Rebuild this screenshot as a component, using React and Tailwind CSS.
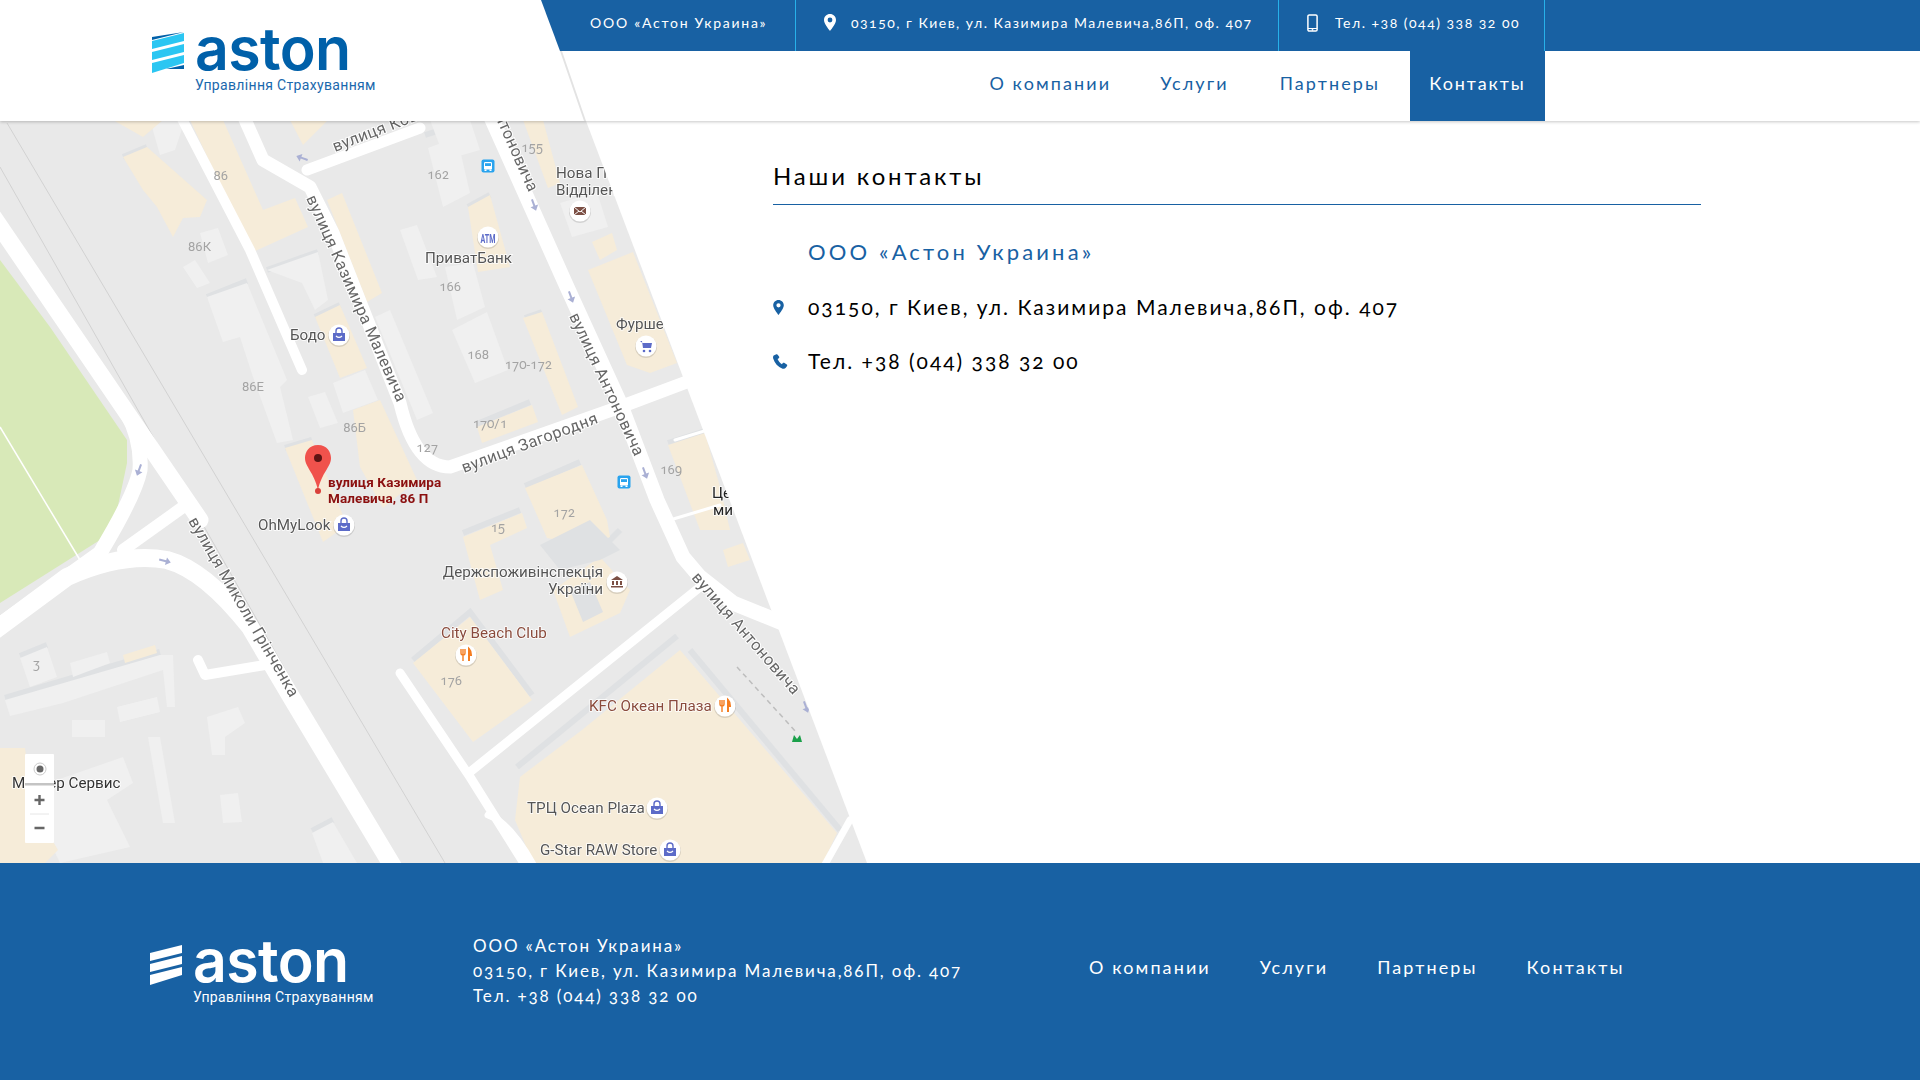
import React from 'react';

// карта: координаты даны в системе страницы (см. viewBox ниже)
const cream = [
  '113,120 163,120 143,137',
  '123,157 147,147 207,200 200,217 183,218 173,237 157,207 143,190',
  '190,120 223,120 263,210 295,198 308,227 253,252 243,233',
  '290,120 328,120 303,145',
  '327,200 342,193 382,293 367,302',
  '315,317 340,305 367,368 340,378',
  '353,410 380,400 417,480 383,508 360,467',
  '285,448 312,440 347,525 323,542',
  '523,120 543,120 560,183 548,188',
  '468,207 490,195 510,267 478,272',
  '588,270 633,252 677,363 650,373 627,365',
  '592,242 612,233 617,250 600,260',
  '523,318 542,312 578,407 562,415',
  '477,427 532,405 538,422 482,443',
  '525,488 582,465 607,520 610,537 575,552 557,540 547,538',
  '668,445 705,433 720,487 730,530 700,530',
  '463,537 522,513 527,528 490,545 503,590 480,600',
  '553,590 600,557 630,590 620,613 570,637',
  '413,663 470,617 532,700 473,742',
  '515,820 520,777 582,730 680,650 837,833 823,863 533,863',
  '723,550 743,543 750,560 728,567',
  '123,655 155,645 157,653 125,663',
  '0,748 25,748 33,807 58,850 45,863 0,863',
];

const light = [
  '207,297 247,283 287,380 280,387 293,440 277,443 253,377 240,337 223,342',
  '267,270 318,252 328,300 315,310 302,283',
  '200,233 218,228 228,255 208,263',
  '183,267 195,260 210,283 197,288',
  '333,383 365,370 378,400 343,413',
  '308,397 325,392 338,423 320,428',
  '400,230 417,225 437,277 418,280',
  '375,317 390,310 433,413 417,420',
  '428,148 457,137 470,193 443,207',
  '445,267 473,263 485,307 457,320',
  '452,330 487,312 508,370 475,383',
  '560,203 597,192 608,227 572,237',
  '20,658 47,647 57,677 30,687',
  '5,700 160,655 173,655 175,707 167,707 163,670 63,703 10,716',
  '70,663 107,652 110,663 73,677',
  '117,707 157,697 160,712 120,722',
  '72,720 105,720 105,737 72,737',
  '207,717 238,707 245,723 225,737 225,755 212,755',
  '220,795 238,793 242,822 223,823',
  '148,737 160,737 175,823 163,823',
  '57,780 123,757 133,783 107,800 130,847 60,863 33,807',
  '312,833 333,822 357,863 323,863',
  '150,120 185,120 175,150 160,155',
  '430,120 470,120 480,150 445,160',
];

const shade = [
  'M123,157 L147,147',
  'M207,297 L247,281',
  'M267,270 L318,252',
  'M315,317 L340,305',
  'M285,448 L312,440',
  'M425,135 L457,125',
  'M468,207 L490,195',
  'M525,318 L542,312',
  'M477,424 L530,402',
  'M525,486 L580,462',
  'M463,533 L520,510',
  'M413,660 L470,612 L532,695',
  'M517,767 L677,636',
  'M690,650 L840,830',
  'M20,656 L47,645',
  'M5,698 L160,652',
  'M312,831 L333,820',
  'M668,443 L705,431',
  'M590,560 L620,530',
];

const roads = [
  { d: 'M-10,212 L127,413 L200,520', w: 17 },
  { d: 'M127,413 Q142,440 140,470 Q135,495 100,553 L-10,632', w: 15 },
  { d: 'M183,507 L123,550', w: 12 },
  { d: 'M-10,634 L67,577 Q123,552 167,560 Q205,570 250,627 L293,700 L395,870', w: 18 },
  { d: 'M180,115 L250,250 L302,370', w: 10 },
  { d: 'M243,115 L263,160 L310,187 L333,233 L400,403 Q415,467 450,467 L620,407 L700,377', w: 13 },
  { d: 'M307,170 L420,128', w: 11 },
  { d: 'M490,115 L567,287 L620,403 L657,500 L683,557 L700,577 L733,603 L780,622', w: 15 },
  { d: 'M700,587 L470,772', w: 9 },
  { d: 'M400,673 L470,777 L527,868', w: 9 },
  { d: 'M488,815 Q510,822 535,868', w: 7 },
  { d: 'M850,820 L823,868', w: 7 },
  { d: 'M198,660 L205,675 L265,665', w: 10 },
  { d: 'M675,440 L740,420', w: 3 },
  { d: 'M670,520 L720,505', w: 3 },
];

const streets = [
  { t: 'вулиця Ковальський', x: 335, y: 152, a: -21 },
  { t: 'вулиця Антоновича', x: 529, y: 193, a: 66, end: true },
  { t: 'вулиця Антоновича', x: 569, y: 316, a: 65 },
  { t: 'вулиця Антоновича', x: 691, y: 578, a: 49 },
  { t: 'вулиця Казимира Малевича', x: 306, y: 198, a: 66 },
  { t: 'вулиця Загородня', x: 464, y: 473, a: -20.5 },
  { t: 'вулиця Миколи Грінченка', x: 188, y: 521, a: 60 },
];

const numbers = [
  ['86', 228, 176], ['86К', 211, 247], ['86Е', 264, 387], ['86Б', 366, 428], ['127', 438, 448],
  ['162', 449, 175], ['155', 543, 148], ['166', 461, 287], ['168', 489, 355], ['170-172', 552, 365],
  ['170/1', 507, 424], ['172', 575, 513], ['169', 682, 470], ['15', 505, 528], ['176', 462, 681], ['3', 40, 665],
];

const pois = [
  { t: 'ПриватБанк', x: 425, y: 263 },
  { t: 'Бодо', x: 290, y: 340 },
  { t: 'Нова Пошта', x: 556, y: 178 },
  { t: 'Відділення', x: 556, y: 195 },
  { t: 'Фурше', x: 616, y: 329 },
  { t: 'Центр', x: 712, y: 498, c: '#222' },
  { t: 'ми', x: 713, y: 515, c: '#222' },
  { t: 'OhMyLook', x: 258, y: 530 },
  { t: 'Держспоживінспекція', x: 603, y: 577, end: true },
  { t: 'України', x: 603, y: 594, end: true },
  { t: 'City Beach Club', x: 441, y: 638, c: '#8a4b3c' },
  { t: 'KFC Океан Плаза', x: 589, y: 711, c: '#8a4b3c' },
  { t: 'ТРЦ Ocean Plaza', x: 527, y: 813 },
  { t: 'G-Star RAW Store', x: 540, y: 855 },
  { t: 'Мастер Сервис', x: 12, y: 788, c: '#333' },
];

const arrows = [[302, 158, 200], [534, 205, 70], [571, 297, 70], [645, 473, 70], [139, 470, 110], [165, 561, 15], [806, 707, 70]];

function PoiMarker({ x, y, kind }) {
  return (
    <g transform={`translate(${x} ${y})`}>
      <circle r="11" cy="1" fill="#000" opacity="0.12" />
      <circle r="10.5" fill="#fff" />
      {kind === 'bag' && (
        <g fill="#5c6bc8">
          <path d="M-6,-2 H6 V6 H-6 Z" />
          <path d="M-3,-2 V-4 A3,3 0 0 1 3,-4 V-2" fill="none" stroke="#5c6bc8" strokeWidth="1.4" />
          <path d="M-3,1 Q0,4 3,1" fill="none" stroke="#fff" strokeWidth="1.2" />
        </g>
      )}
      {kind === 'food' && (
        <g stroke="#f57c1f" fill="none" strokeWidth="2">
          <path d="M-3,-6 V6 M-5,-6 V-2 Q-5,0 -3,0 Q-1,0 -1,-2 V-6" strokeWidth="1.4" />
          <path d="M3,6 V-6 Q5,-4 5,0 H3" strokeWidth="2" />
        </g>
      )}
      {kind === 'atm' && <text y="6" textAnchor="middle" fontSize="13" fontWeight="700" fill="#5c6bc8" fontFamily="Roboto, sans-serif" textLength="15" lengthAdjust="spacingAndGlyphs">ATM</text>}
      {kind === 'mail' && (
        <g>
          <path d="M-6,-4 H6 V4 H-6 Z" fill="#7b4f44" />
          <path d="M-6,-4 L0,1 L6,-4 M-6,4 L-1,0 M6,4 L1,0" fill="none" stroke="#fff" strokeWidth="1" />
        </g>
      )}
      {kind === 'cart' && (
        <g fill="#5c6bc8">
          <path d="M-6,-5 H-4 L-3,2 H5 L6,-3 H-3.5 Z" />
          <circle cx="-2" cy="5" r="1.3" />
          <circle cx="4" cy="5" r="1.3" />
        </g>
      )}
      {kind === 'gov' && (
        <g fill="#7b4f44">
          <path d="M-6,-2 L0,-6 L6,-2 Z" />
          <path d="M-5,-1 H-3 V3 H-5 Z M-1,-1 H1 V3 H-1 Z M3,-1 H5 V3 H3 Z M-6,4 H6 V5.5 H-6 Z" />
        </g>
      )}
    </g>
  );
}

function BusIcon({ x, y }) {
  return (
    <g transform={`translate(${x} ${y})`}>
      <rect x="-6.5" y="-6.5" width="13" height="13" rx="2" fill="#29a3ee" />
      <rect x="-4" y="-4" width="8" height="7.5" rx="1.2" fill="#fff" />
      <rect x="-3" y="-2.8" width="6" height="2.8" fill="#29a3ee" />
      <rect x="-3.5" y="3.5" width="2" height="1.5" fill="#fff" />
      <rect x="1.5" y="3.5" width="2" height="1.5" fill="#fff" />
    </g>
  );
}

function MapPicture() {
  return (
    <svg width="867" height="742" viewBox="0 121 867 742" className="block blur-[0.5px]">
      <rect x="0" y="121" width="867" height="742" fill="#e9e9e9" />
      <path d="M0,260 L50,327 L127,440 L127,463 L115,520 L100,540 L0,603 Z" fill="#d8e9b8" />
      <path d="M0,427 L80,560" stroke="#fff" strokeWidth="1.5" fill="none" />
      <path d="M7,123 L445,863 M0,167 L395,863" stroke="#d2d2d2" strokeWidth="1" fill="none" />
      {shade.map((d) => <path key={d} d={d} stroke="#dfe1e3" strokeWidth="6" fill="none" />)}
      {light.map((p) => <polygon key={p} points={p} fill="#f0f0f0" />)}
      {cream.map((p) => <polygon key={p} points={p} fill="#f6ecd9" />)}
      <polygon points="570,590 590,582 603,612 583,622" fill="#dfe1e3" />
      <polygon points="540,545 590,520 620,550 600,560 560,570" fill="#dfe1e3" />
      {roads.map((r) => <path key={r.d} d={r.d} stroke="#fff" strokeWidth={r.w} fill="none" strokeLinecap="round" strokeLinejoin="round" />)}
      <path d="M737,667 L797,733" stroke="#bdbdbd" strokeWidth="1.5" strokeDasharray="5 4" fill="none" />
      {arrows.map(([x, y, a]) => (
        <path key={`${x}-${y}`} transform={`translate(${x} ${y}) rotate(${a})`} d="M-6,-1 H1 V-4 L6,0 L1,4 V1 H-6 Z" fill="#aab0d4" />
      ))}
      <g fontFamily="Roboto, sans-serif" fontSize="16.2" fill="#666" stroke="#fff" strokeWidth="2" paintOrder="stroke">
        {streets.map((s) => (
          <text key={`${s.x}-${s.y}`} transform={`translate(${s.x} ${s.y}) rotate(${s.a})`} textAnchor={s.end ? 'end' : 'start'} letterSpacing="0.4">{s.t}</text>
        ))}
      </g>
      <g fontFamily="Roboto, sans-serif" fontSize="13" fill="#a3a3a3">
        {numbers.map(([t, x, y]) => <text key={t} x={x} y={y + 4} textAnchor="end">{t}</text>)}
      </g>
      <g fontFamily="Roboto, sans-serif" fontSize="15.2" fill="#555" stroke="#fff" strokeWidth="1.5" paintOrder="stroke">
        {pois.map((p) => (
          <text key={p.t} x={p.x} y={p.y} fill={p.c || '#555'} textAnchor={p.end ? 'end' : 'start'}>{p.t}</text>
        ))}
      </g>
      <PoiMarker x={339} y={335} kind="bag" />
      <PoiMarker x={580} y={211} kind="mail" />
      <PoiMarker x={488} y={237} kind="atm" />
      <PoiMarker x={646} y={346} kind="cart" />
      <PoiMarker x={344} y={525} kind="bag" />
      <PoiMarker x={617} y={582} kind="gov" />
      <PoiMarker x={466} y={655} kind="food" />
      <PoiMarker x={725} y={706} kind="food" />
      <PoiMarker x={657} y={808} kind="bag" />
      <PoiMarker x={670} y={850} kind="bag" />
      <BusIcon x={488} y={166} />
      <BusIcon x={624} y={482} />
      <path d="M792,742 L794,735 L797,739 L800,735 L802,742 Z" fill="#1aa04a" />
      {/* маркер адреса */}
      <path d="M318,445 C309,445 305,452 305,458 C305,467 314,472 318,490 C322,472 331,467 331,458 C331,452 327,445 318,445 Z" fill="#f0524c" />
      <circle cx="318" cy="458" r="4" fill="#5c1414" />
      <circle cx="318" cy="491" r="3" fill="#d9403a" />
      <g fontFamily="Roboto, sans-serif" fontSize="13.5" fontWeight="700" fill="#8b1010" letterSpacing="0.1">
        <text x="328" y="487">вулиця Казимира</text>
        <text x="328" y="503">Малевича, 86 П</text>
      </g>
      {/* зум */}
      <rect x="25" y="754" width="29" height="89" rx="1" fill="#fff" />
      <rect x="25" y="783" width="29" height="2.5" fill="#c4c4c4" />
      <path d="M30,814 H49" stroke="#e6e6e6" strokeWidth="1" />
      <circle cx="40" cy="769" r="3.5" fill="#666" />
      <circle cx="40" cy="769" r="6" fill="none" stroke="#ccc" strokeWidth="1" />
      <path d="M39.5,795 V805 M34.5,800 H44.5 M34.5,828 H44.5" stroke="#666" strokeWidth="2.4" />
    </svg>
  );
}

function Logo({ footer }) {
  const band = footer ? '#ffffff' : '#2bc6f2';
  return (
    <div className="flex gap-[11px]">
      <svg width="32" height="41" viewBox="0 0 32 41" className="mt-[13px] shrink-0">
        <polygon points="0,9 32,1 32,9 0,17" fill={band} />
        <polygon points="0,20 32,12 32,20 0,28" fill={band} />
        <polygon points="0,31 32,23 32,31 0,41" fill={band} />
        {!footer && <polygon points="0,5 32,0 0,8" fill="#0060a9" />}
        {!footer && <polygon points="32,33 32,37 14,37" fill="#0060a9" />}
      </svg>
      <div>
        <div className={`h-[58px] font-['Inter',sans-serif] text-[59px] leading-none font-semibold tracking-[-0.6px] ${footer ? 'text-white' : 'text-[#0060a9]'}`}>aston</div>
        <div className={`w-[180px] font-['Roboto',sans-serif] text-[14px] leading-4 tracking-[0.33px] whitespace-nowrap ${footer ? 'text-white' : 'text-[#1a68ad]'}`}>Управління Страхуванням</div>
      </div>
    </div>
  );
}

function PinIcon({ className }) {
  return (
    <svg viewBox="0 0 12 17" className={className} fill="currentColor">
      <path fillRule="evenodd" d="M6 0C2.700 0 0 2.600 0 5.900 0 9.500 4.400 14.700 6 17c1.600-2.300 6-7.500 6-11.100C12 2.600 9.300 0 6 0Zm0 3.600a2.400 2.400 0 1 1 0 4.800 2.400 2.400 0 0 1 0-4.800Z" />
    </svg>
  );
}

function PhoneIcon({ className }) {
  return (
    <svg viewBox="0 0 16 16" className={className} fill="currentColor">
      <path d="M3.600.3 1.300 1.400C.1 2-.2 3.400.2 4.700c1.500 5 5 9 10 10.900 1.300.5 2.600.2 3.400-.9l1.400-2c.3-.5.2-1.100-.3-1.400l-2.800-1.900c-.5-.3-1-.2-1.400.2l-1 1.200C7.500 9.700 5.800 7.700 4.900 5.300l1.300-.9c.5-.3.6-.9.4-1.400L5 .7C4.700.2 4.100 0 3.600.3Z" />
    </svg>
  );
}

function MobileIcon({ className }) {
  return (
    <svg viewBox="0 0 11 18" className={className} fill="none" stroke="currentColor">
      <rect x="0.9" y="0.9" width="9.2" height="16.2" rx="1.4" strokeWidth="1.5" />
      <path d="M1 14.5H10" strokeWidth="1" />
      <circle cx="5.5" cy="15.8" r="0.5" fill="currentColor" />
    </svg>
  );
}

const navItems = [
  { label: 'О компании', gap: 'mr-[49px]' },
  { label: 'Услуги', gap: 'mr-[51px]' },
  { label: 'Партнеры', gap: 'mr-[30px]' },
];

export default function App() {
  return (
    <div className="flex min-h-screen flex-col bg-white font-['Lato','Open_Sans',sans-serif] oldstyle-nums">
      {/* шапка */}
      <header className="relative z-10 flex h-[121px] bg-white shadow-[0_1px_3px_rgba(0,0,0,0.22)]">
        <div className="w-[541px] shrink-0 pt-[19px] pl-[152px]">
          <Logo />
        </div>
        <div className="relative flex flex-1 flex-col">
          <div className="flex h-[51px] bg-[#1861a3] text-[14px] tracking-[1.5px] text-white [clip-path:polygon(0_0,100%_0,100%_100%,19px_100%)]">
            <div className="flex w-[255px] shrink-0 items-center border-r border-[#27b1ea] pb-[6px] pl-[49px] tracking-[1.75px] whitespace-nowrap">ООО «Астон Украина»</div>
            <div className="flex w-[483px] shrink-0 items-center border-r border-[#27b1ea] pb-[6px] pl-[28px]">
              <PinIcon className="mr-[15px] h-[17px] w-[12px] shrink-0" />
              <span className="whitespace-nowrap">03150, г Киев, ул. Казимира Малевича,86П, оф. 407</span>
            </div>
            <div className="flex w-[266px] shrink-0 items-center border-r border-[#27b1ea] pb-[6px] pl-[28px]">
              <MobileIcon className="mr-[17px] h-[18px] w-[11px] shrink-0" />
              <span className="whitespace-nowrap">Тел. +38 (044) 338 32 00</span>
            </div>
          </div>
          <nav className="flex flex-1 justify-end pr-[375px] text-[18px] tracking-[2.1px] text-[#1861a3]">
            {navItems.map((item) => (
              <a key={item.label} className={`flex items-center pb-[6px] ${item.gap}`}>{item.label}</a>
            ))}
            <a className="flex w-[135px] items-center justify-center bg-[#1861a3] pb-[6px] tracking-[1.9px] text-white">Контакты</a>
          </nav>
          <div className="absolute top-[51px] left-[19px] h-[70px] w-[32px] bg-[#e3e3e3] [clip-path:polygon(0_0,2px_0,26px_100%,24px_100%)]" />
        </div>
      </header>

      {/* карта и контакты */}
      <main className="grid h-[742px] grid-cols-1 grid-rows-1">
        <div className="col-start-1 row-start-1 h-[742px] w-[867px] [clip-path:polygon(0_0,586px_0,867px_100%,0_100%)]">
          <MapPicture />
        </div>
        <section className="z-[1] col-start-1 row-start-1 pt-[37px] pr-[219px] pl-[773px]">
          <h1 className="h-[47px] border-b border-[#1861a3] text-[24px] leading-9 font-normal tracking-[2.85px] text-black">Наши контакты</h1>
          <p className="mt-[32px] pl-[35px] text-[22px] leading-[30px] tracking-[3.15px] text-[#1861a3]">ООО «Астон Украина»</p>
          <p className="mt-[25px] flex items-center text-[21px] leading-[30px] tracking-[2.02px] text-black">
            <span className="w-[35px]"><PinIcon className="h-[15px] w-[11px] text-[#1861a3]" /></span>
            03150, г Киев, ул. Казимира Малевича,86П, оф. 407
          </p>
          <p className="mt-[24px] flex items-center text-[21px] leading-[30px] tracking-[2px] text-black">
            <span className="w-[35px]"><PhoneIcon className="h-[15px] w-[15px] text-[#1861a3]" /></span>
            Тел. +38 (044) 338 32 00
          </p>
        </section>
      </main>

      {/* подвал */}
      <footer className="flex h-[217px] bg-[#1861a3] pl-[150px] text-white">
        <div className="w-[323px] shrink-0 pt-[68px]">
          <Logo footer />
        </div>
        <div className="w-[616px] shrink-0 pt-[70px] text-[17px] leading-[25.2px] tracking-[1.85px] whitespace-nowrap">
          <p>ООО «Астон Украина»</p>
          <p>03150, г Киев, ул. Казимира Малевича,86П, оф. 407</p>
          <p>Тел. +38 (044) 338 32 00</p>
        </div>
        <nav className="flex gap-[49px] pt-[92px] text-[18px] leading-6 tracking-[2.1px]">
          <a>О компании</a>
          <a>Услуги</a>
          <a>Партнеры</a>
          <a>Контакты</a>
        </nav>
      </footer>
    </div>
  );
}
